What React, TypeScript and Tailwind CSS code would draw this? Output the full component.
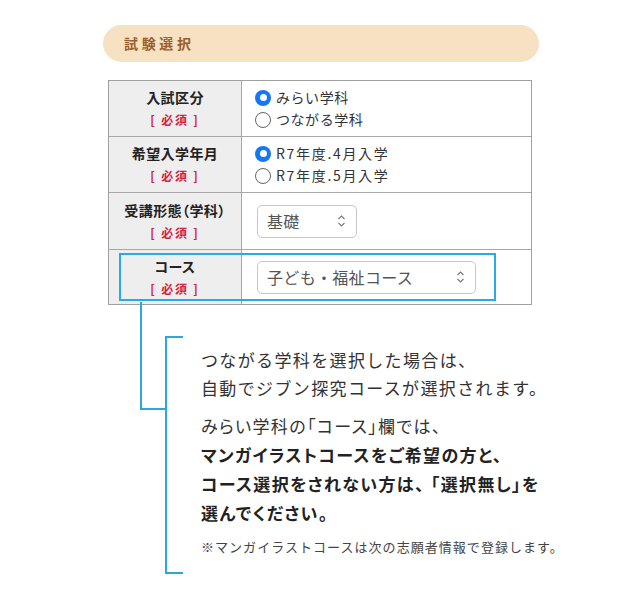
import React from "react";

const jp = "font-['Noto_Sans_CJK_JP',sans-serif]";

function Radio({ checked, label, wide }: { checked?: boolean; label: string; wide?: boolean }) {
  return (
    <label
      className={`flex items-center gap-[5px] h-[22px] text-[14px] text-[#333] ${wide ? "tracking-[0.12em]" : "tracking-[0.04em]"}`}
    >
      {checked ? (
        <span className="w-[16px] h-[16px] rounded-full bg-[#1677f2] flex items-center justify-center">
          <span className="w-[7px] h-[7px] rounded-full bg-white" />
        </span>
      ) : (
        <span className="w-[16px] h-[16px] rounded-full border-[1.5px] border-[#666] bg-white" />
      )}
      <span>{label}</span>
    </label>
  );
}

function Chevrons() {
  return (
    <svg width="9" height="14" viewBox="0 0 9 14" fill="none" stroke="#777" strokeWidth="1.1">
      <path d="M1.5 5 L4.5 2 L7.5 5" />
      <path d="M1.5 9 L4.5 12 L7.5 9" />
    </svg>
  );
}

function Select({ value, width }: { value: string; width: string }) {
  return (
    <div
      className={`${width} h-[33px] rounded-[5px] border border-[#c8c8c8] bg-white flex items-center justify-between pl-[9px] pr-[10px] text-[16px] text-[#555] tracking-[0.02em]`}
    >
      <span>{value}</span>
      <Chevrons />
    </div>
  );
}

function Label({ title }: { title: string }) {
  return (
    <div className="w-[133px] shrink-0 border-r border-[#a8a8a8] bg-[#eeeeee] flex flex-col items-center justify-center">
      <span className="text-[14px] font-bold leading-[20px] text-[#222] tracking-[0.03em] [font-feature-settings:'palt']">
        {title}
      </span>
      <span className="mt-[3px] text-[12px] font-bold leading-[20px] text-[#d3213b] tracking-[0.15em]">
        [ 必須 ]
      </span>
    </div>
  );
}

export default function App() {
  return (
    <div className={`relative w-[640px] h-[600px] bg-white ${jp} overflow-hidden`}>
      <div className="ml-[103px] mt-[25px] w-[436px] h-[37px] rounded-full bg-[#f6e1c3] flex items-center pl-[21px]">
        <span className="text-[14px] font-bold text-[#9b5d2a] tracking-[0.26em]">試験選択</span>
      </div>

      <div className="relative ml-[108px] mt-[18px] w-[424px] border border-[#a0a0a0]">
        <div className="flex h-[55px]">
          <Label title="入試区分" />
          <div className="flex flex-col justify-center pl-[13px]">
            <Radio checked label="みらい学科" />
            <Radio label="つながる学科" />
          </div>
        </div>
        <div className="flex h-[56px] border-t border-[#a8a8a8]">
          <Label title="希望入学年月" />
          <div className="flex flex-col justify-center pl-[13px]">
            <Radio checked wide label="R7年度.4月入学" />
            <Radio wide label="R7年度.5月入学" />
          </div>
        </div>
        <div className="flex h-[57px] border-t border-[#a8a8a8]">
          <Label title="受講形態（学科）" />
          <div className="flex items-center pl-[15px]">
            <Select value="基礎" width="w-[100px]" />
          </div>
        </div>
        <div className="flex h-[55px] border-t border-[#a8a8a8]">
          <Label title="コース" />
          <div className="flex items-center pl-[15px]">
            <Select value="子ども・福祉コース" width="w-[219px]" />
          </div>
        </div>
        {/* highlight on the course row */}
        <div className="absolute left-[10px] top-[172px] w-[377px] h-[48px] border-2 border-[#2aa9e6]" />
      </div>

      <div className="ml-[165px] mt-[31px] flex">
        <div className="w-[18px] shrink-0 border-l-2 border-t-2 border-b-2 border-[#2aa7e3]" />
        <div className="pl-[18px] pt-[10px] pb-[17px] text-[#333]">
          <p className="text-[17px] leading-[28px] tracking-[0.08em]">
            つながる学科を選択した場合は、
            <br />
            自動でジブン探究コースが選択されます。
          </p>
          <p className="mt-[9px] text-[17px] leading-[29px] tracking-[0.08em] [font-feature-settings:'palt']">
            みらい学科の「コース」欄では、
            <br />
            <span className="font-bold text-[#222]">
              マンガイラストコースをご希望の方と、
              <br />
              コース選択をされない方は、<span className="ml-[6px]">「選択無し」を</span>
              <br />
              選んでください。
            </span>
          </p>
          <p className="mt-[10px] text-[13px] leading-[20px] tracking-[0.08em] text-[#444]">
            ※マンガイラストコースは次の志願者情報で登録します。
          </p>
        </div>
      </div>

      <svg className="absolute left-0 top-0 pointer-events-none" width="640" height="600">
        <path d="M141 302 V409 H165" fill="none" stroke="#2aa7e3" strokeWidth="2" />
      </svg>
    </div>
  );
}
